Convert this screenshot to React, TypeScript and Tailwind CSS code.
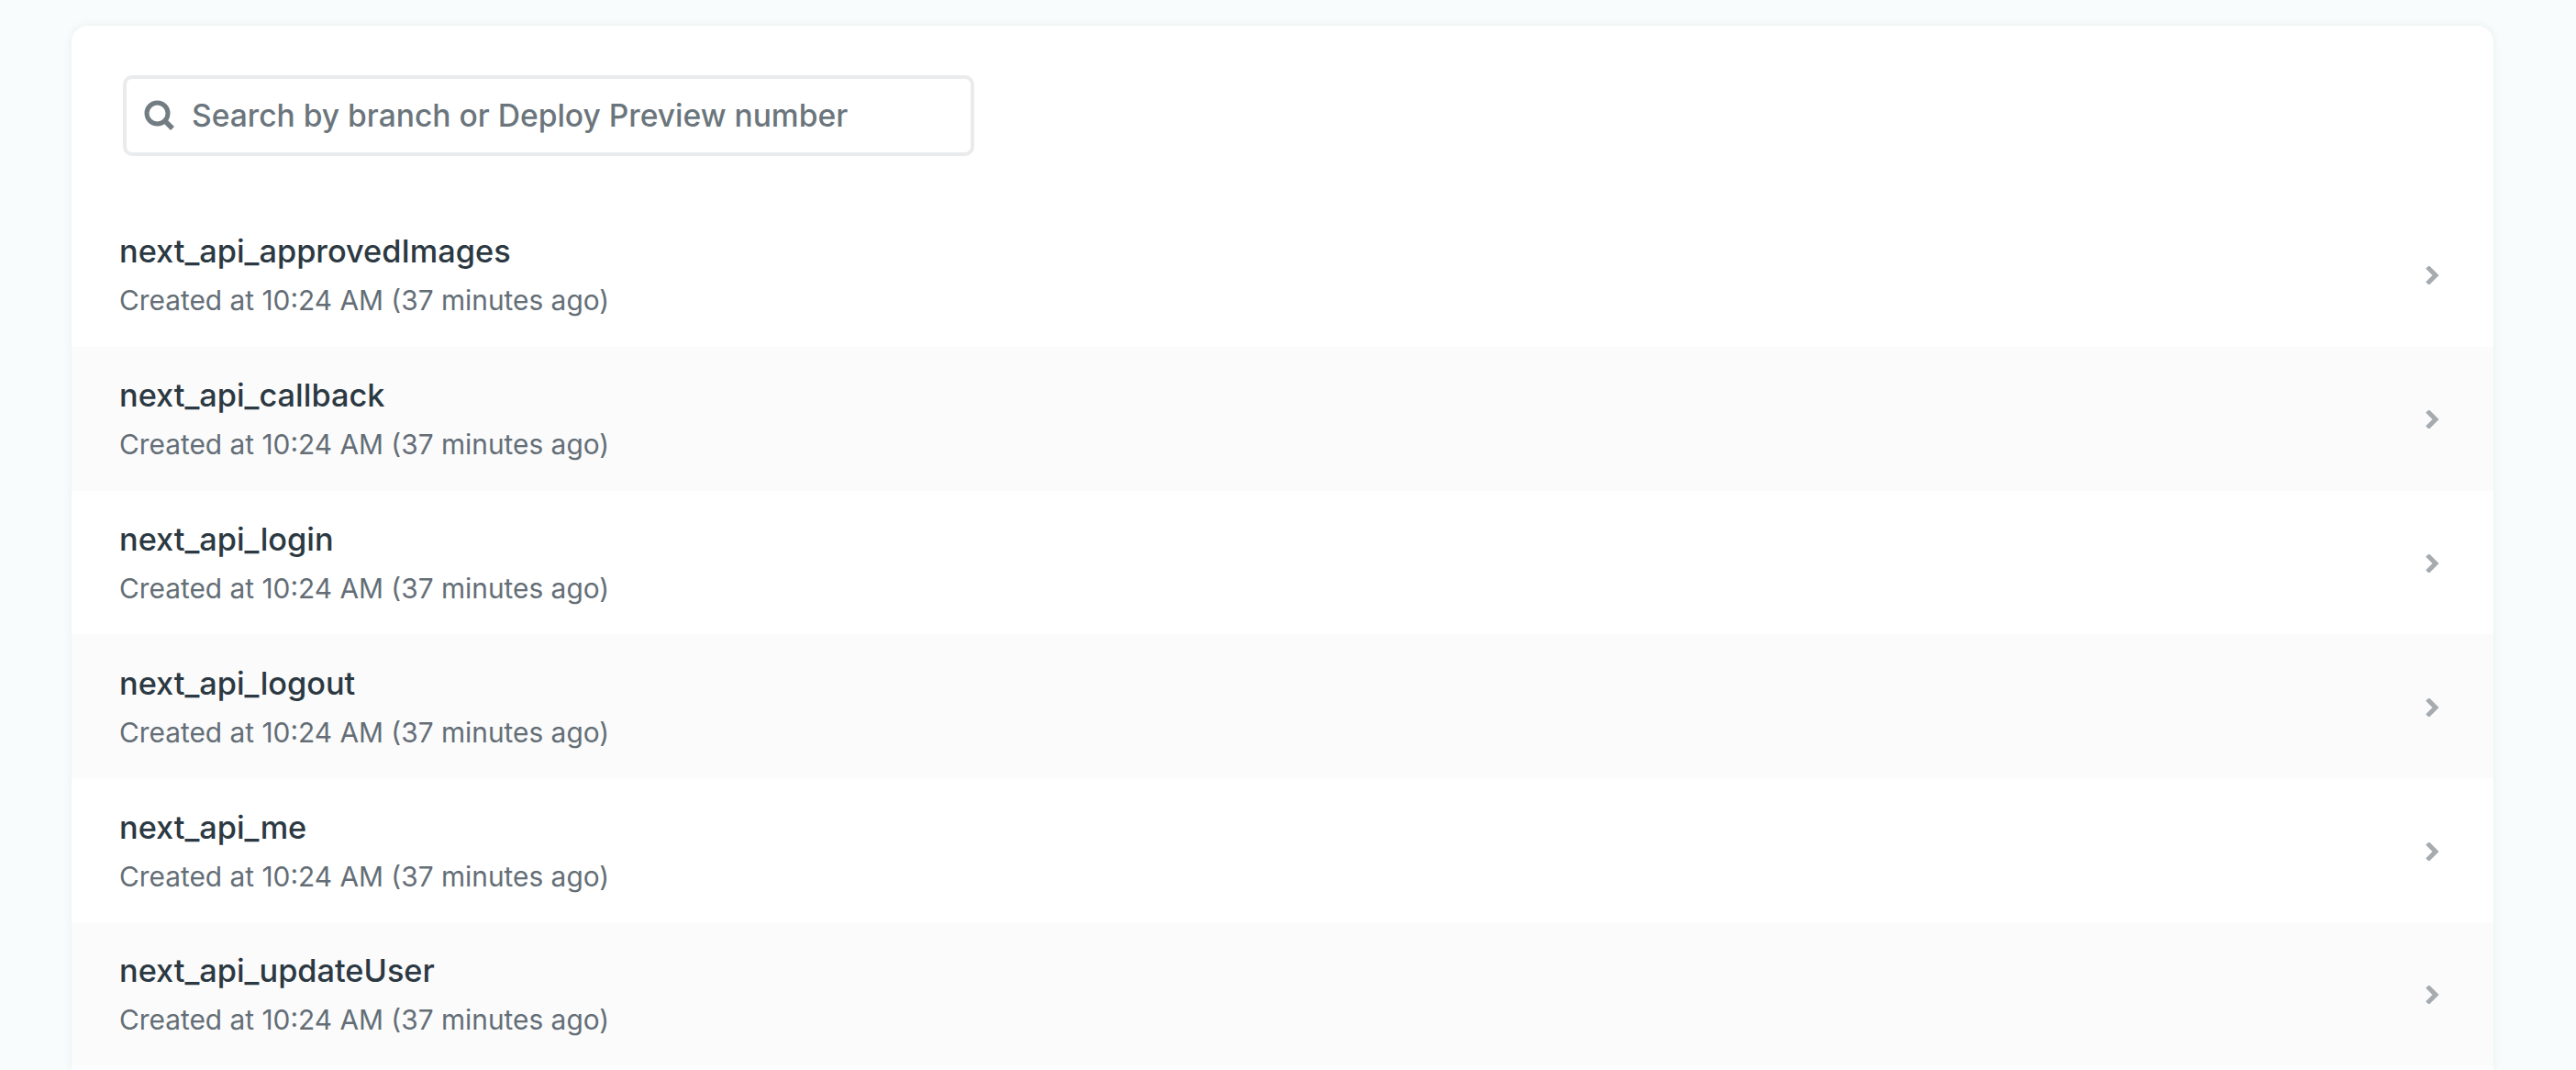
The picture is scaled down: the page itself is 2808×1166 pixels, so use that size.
import React from 'react';

const branches = [
  'next_api_approvedImages',
  'next_api_callback',
  'next_api_login',
  'next_api_logout',
  'next_api_me',
  'next_api_updateUser',
];

function SearchIcon() {
  return (
    <svg width="34" height="34" viewBox="0 0 34 34" fill="none" className="shrink-0">
      <circle cx="14.5" cy="14.5" r="11.5" stroke="#727c83" strokeWidth="5" />
      <path d="M22.5 22.5L31 31" stroke="#727c83" strokeWidth="5.5" />
    </svg>
  );
}

function Chevron() {
  return (
    <svg width="16" height="20" viewBox="0 0 16 20" className="shrink-0">
      <path d="M3 1L12 10L3 19" fill="none" stroke="#a6abaf" strokeWidth="5" />
    </svg>
  );
}

export default function App() {
  return (
    <div className="h-[1166px] overflow-hidden bg-[#f8fcfd] px-[78px] pt-[28px] font-['Inter',sans-serif]">
      <div className="h-full w-[2640px] rounded-t-[18px] bg-white pt-[54px] shadow-[0_0_10px_rgba(40,60,70,0.08)]">
        <div className="mb-[51px] ml-[56px] flex h-[88px] w-[928px] items-center gap-[18px] rounded-[10px] border-[4px] border-[#e9ebec] pl-[19px]">
          <SearchIcon />
          <span className="text-[33.6px] font-medium text-[#6b757c]">Search by branch or Deploy Preview number</span>
        </div>
        {branches.map((name, i) => (
          <div key={name} className={`flex h-[156.8px] items-center justify-between pt-[2px] pl-[52px] pr-[59px] ${i % 2 === 1 ? 'bg-[#fbfbfc]' : 'bg-white'}`}>
            <div>
              <div className="-mt-[1px] text-[34.3px] leading-[48px] font-medium text-[#2c3942]">{name}</div>
              <div className="mt-[7px] text-[29.85px] leading-[44px] text-[#646e76]">Created at 10:24 AM (37 minutes ago)</div>
            </div>
            <Chevron />
          </div>
        ))}
      </div>
    </div>
  );
}
